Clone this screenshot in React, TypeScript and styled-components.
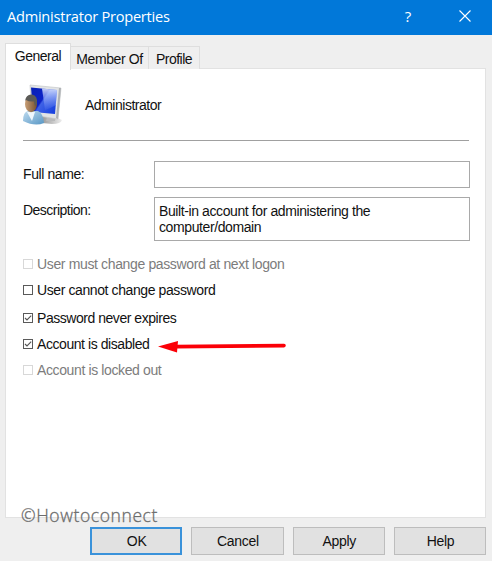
import React from "react";
import styled, { createGlobalStyle } from "styled-components";

const Global = createGlobalStyle`
  * { box-sizing: border-box; }
  body { margin: 0; overflow: hidden; background: #efefef; }
`;

const Dialog = styled.main`
  position: relative;
  width: 492px;
  height: 561px;
  display: flex;
  flex-direction: column;
  background: #efefef;
  font-family: "Liberation Sans", Arial, sans-serif;
  font-size: 14px;
  line-height: 16px;
  color: #111;
  white-space: nowrap;
`;

const TitleBar = styled.header`
  flex: none;
  height: 35px;
  padding: 0 20px 3px 7px;
  display: flex;
  align-items: center;
  background: #0178d9;
  color: #fff;
`;

const Title = styled.h1`
  flex: 1;
  margin: 0;
  font: 400 14.6px/20px "Open Sans", "Noto Sans", sans-serif;
  letter-spacing: -0.25px;
`;

const TitleButton = styled.button`
  display: flex;
  align-items: center;
  justify-content: center;
  width: 14px;
  height: 32px;
  margin-left: 43px;
  padding: 0;
  border: 0;
  background: none;
  color: #fff;
  font: 400 15px "Open Sans", sans-serif;
`;

const Tabs = styled.nav`
  flex: none;
  height: 34px;
  padding: 8px 0 0 5px;
  display: flex;
  align-items: flex-end;
  position: relative;
`;

const Tab = styled.button<{ $active?: boolean; $width: number }>`
  width: ${(p) => p.$width}px;
  height: ${(p) => (p.$active ? 27 : 23)}px;
  padding: ${(p) => (p.$active ? "0 0 3px" : "1px 0 0")};
  margin-bottom: ${(p) => (p.$active ? -1 : 0)}px;
  border: 1px solid #dedede;
  border-left-width: ${(p) => (p.$active ? 1 : 0)}px;
  border-bottom: 0;
  background: ${(p) => (p.$active ? "#fff" : "#efefef")};
  z-index: ${(p) => (p.$active ? 1 : 0)};
  position: relative;
  font: inherit;
  color: inherit;
`;

const Panel = styled.section`
  flex: none;
  width: 481px;
  height: 450px;
  margin: -1px 0 0 5px;
  padding: 14px 15px 0 17px;
  border: 1px solid #e2e2e2;
  background: #fff;
`;

const Identity = styled.div`
  height: 58px;
  width: 446px;
  display: flex;
  align-items: flex-start;
  border-bottom: 1px solid #a0a0a0;

  svg { margin-top: 1px; }
`;

const Name = styled.span`
  margin: 14px 0 0 22px;
`;

const Field = styled.div<{ $top: number; $height: number }>`
  display: grid;
  grid-template-columns: 131px 316px;
  height: ${(p) => p.$height}px;
  margin-top: ${(p) => p.$top}px;
`;

const Label = styled.span`
  padding-top: 5px;
`;

const Box = styled.div`
  border: 1px solid #a9a9a9;
  padding: 5px 4px;
  line-height: 16px;
`;

const Text = styled.span<{ $track?: number }>`
  letter-spacing: ${(p) => p.$track ?? -0.4}px;
`;

const Options = styled.div`
  display: flex;
  flex-direction: column;
  margin-top: 16px;
`;

const Option = styled.label<{ $disabled?: boolean; $height: number }>`
  display: flex;
  align-items: flex-start;
  gap: 4px;
  height: ${(p) => p.$height}px;
  color: ${(p) => (p.$disabled ? "#7c7c7c" : "#111")};
`;

const Check = styled.span<{ $disabled?: boolean }>`
  display: flex;
  width: 10px;
  height: 10px;
  margin-top: 3px;
  border: 1px solid ${(p) => (p.$disabled ? "#d8d8d8" : "#5a5a5a")};
`;

const Footer = styled.footer`
  display: flex;
  gap: 9px;
  padding: 9px 0 0 90px;
`;

const Button = styled.button<{ $primary?: boolean }>`
  width: 92.3px;
  height: 28px;
  padding: 0 0 0 1px;
  border: ${(p) => (p.$primary ? "2px solid #3a92da" : "1px solid #bdbdbd")};
  background: #e1e1e1;
  font: inherit;
  letter-spacing: -0.3px;
  color: inherit;
`;

const Arrow = styled.svg`
  position: absolute;
  left: 156px;
  top: 337px;
`;

const Watermark = styled.span`
  position: absolute;
  left: 21px;
  top: 503px;
  font: 300 17.5px/24px "Open Sans", sans-serif;
  letter-spacing: 0.6px;
  color: #6c6c6c;
  -webkit-text-stroke: 0.3px #6c6c6c;
`;

const UserIcon = () => (
  <svg width="40" height="42" viewBox="0 0 40 42">
    <defs>
      <linearGradient id="screen" x1="0" y1="0" x2="1" y2="0.7">
        <stop offset="0" stopColor="#0720b4" />
        <stop offset="0.5" stopColor="#0d22c8" />
        <stop offset="0.55" stopColor="#3f62e6" />
        <stop offset="1" stopColor="#1a43df" />
      </linearGradient>
      <linearGradient id="glare" x1="0" y1="0" x2="0" y2="1">
        <stop offset="0" stopColor="#e4ecff" stopOpacity="0.85" />
        <stop offset="1" stopColor="#8ba6ff" stopOpacity="0.1" />
      </linearGradient>
      <linearGradient id="skin">
        <stop offset="0" stopColor="#c89f77" />
        <stop offset="1" stopColor="#76512f" />
      </linearGradient>
      <linearGradient id="shirt" x1="0" y1="0" x2="1" y2="1">
        <stop offset="0" stopColor="#bfdcf0" />
        <stop offset="1" stopColor="#5796c4" />
      </linearGradient>
      <linearGradient id="stand">
        <stop offset="0" stopColor="#999" />
        <stop offset="1" stopColor="#eee" />
      </linearGradient>
    </defs>
    <path d="M19 32 32 33 39 36Q38 40 29 40L19 39Z" fill="url(#stand)" />
    <path d="M25 30 33 31 32 37 23 37Z" fill="#b9babb" />
    <path d="M7 1 38 4 35 35 9 31Z" fill="#e2e4e5" stroke="#c5c8ca" strokeWidth=".7" />
    <path d="M36 4 38 4 35 35 33 34Z" fill="#afb2b5" />
    <path d="M8 3.5 34 6 32 30 10 28Z" fill="url(#screen)" />
    <path d="M19 4.5 34 6 33 21Q26 25 22 26Z" fill="url(#glare)" />
    <path d="M0 37Q0 28 5 27L15 27Q20 29 21 39Q12 43 0 37Z" fill="url(#shirt)" />
    <path d="M4 28 9 37 12 28Z" fill="#eff7fc" />
    <ellipse cx="8" cy="20" rx="6" ry="8.2" fill="url(#skin)" />
    <path d="M2 17Q3 10 9 10.5Q15 11.5 14 20L12 22 11 17.5Q6 18 3 16Z" fill="#5c5b57" />
  </svg>
);

const options = [
  { text: "User must change password at next logon", disabled: true, checked: false, height: 26, track: -0.36 },
  { text: "User cannot change password", disabled: false, checked: false, height: 28, track: -0.4 },
  { text: "Password never expires", disabled: false, checked: true, height: 26, track: -0.46 },
  { text: "Account is disabled", disabled: false, checked: true, height: 26, track: -0.43 },
  { text: "Account is locked out", disabled: true, checked: false, height: 26, track: -0.38 },
];

export default function App() {
  return (
    <>
      <Global />
      <Dialog>
        <TitleBar>
          <Title>Administrator Properties</Title>
          <TitleButton aria-label="Help">?</TitleButton>
          <TitleButton aria-label="Close">
            <svg width="12" height="12" viewBox="0 0 12 12">
              <path d="M.5.5 11.5 11.5M11.5.5.5 11.5" stroke="#fff" strokeWidth="1.1" />
            </svg>
          </TitleButton>
        </TitleBar>
        <Tabs>
          <Tab $active $width={66}><Text $track={-0.5}>General</Text></Tab>
          <Tab $width={78}><Text>Member Of</Text></Tab>
          <Tab $width={51}><Text $track={-0.5}>Profile</Text></Tab>
        </Tabs>
        <Panel>
          <Identity>
            <UserIcon />
            <Name><Text $track={-0.48}>Administrator</Text></Name>
          </Identity>
          <Field $top={20} $height={27}>
            <Label><Text>Full name:</Text></Label>
            <Box />
          </Field>
          <Field $top={9} $height={43}>
            <Label><Text $track={-0.52}>Description:</Text></Label>
            <Box>
              <Text>Built-in account for administering the</Text>
              <br />
              <Text>computer/domain</Text>
            </Box>
          </Field>
          <Options>
            {options.map((o) => (
              <Option key={o.text} $disabled={o.disabled} $height={o.height}>
                <Check $disabled={o.disabled}>
                  {o.checked && (
                    <svg width="8" height="8" viewBox="0 0 8 8">
                      <path d="M1 4 3 6 7.2 1.6" fill="none" stroke="#555" strokeWidth="1.1" />
                    </svg>
                  )}
                </Check>
                <Text $track={o.track}>{o.text}</Text>
              </Option>
            ))}
          </Options>
        </Panel>
        <Footer>
          <Button $primary>OK</Button>
          <Button>Cancel</Button>
          <Button>Apply</Button>
          <Button>Help</Button>
        </Footer>
        <Arrow width="132" height="18" viewBox="0 0 132 18">
          <path d="M20 9.6 128 8.6" stroke="#fb0007" strokeWidth="3.6" strokeLinecap="round" />
          <path d="M2 9.5 22 4 21 15.5Z" fill="#fb0007" />
        </Arrow>
        <Watermark>©Howtoconnect</Watermark>
      </Dialog>
    </>
  );
}
